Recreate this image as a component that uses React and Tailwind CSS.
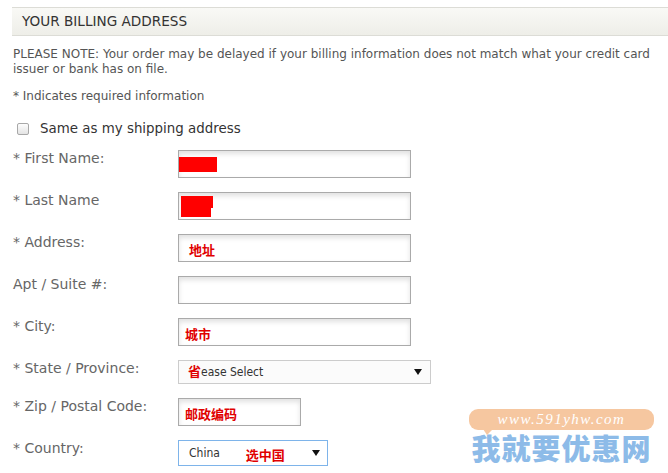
import React from "react"

const FIELDS = [
  { label: "* First Name:", kind: "input", width: "w-[233px]", fill: "first" },
  { label: "* Last Name", kind: "input", width: "w-[233px]", fill: "last" },
  { label: "* Address:", kind: "input", width: "w-[233px]", fill: "地址", pad: "pl-[10px]" },
  { label: "Apt / Suite #:", kind: "input", width: "w-[233px]" },
  { label: "* City:", kind: "input", width: "w-[233px]", fill: "城市", pad: "pl-[6px]" },
  { label: "* State / Province:", kind: "state" },
  { label: "* Zip / Postal Code:", kind: "input", width: "w-[123px]", fill: "邮政编码", pad: "pl-[6px]" },
  { label: "* Country:", kind: "country" },
]

const cn = "font-['Noto_Sans_CJK_SC',sans-serif] font-bold text-[13px] text-[#e00000]"

const TextBox = ({ width, fill, pad }) => (
  <div
    className={`${width} h-[28px] border border-[#aaaaaa] bg-white shadow-[inset_0_3px_5px_rgba(0,0,0,0.12)] flex flex-col items-start`}>
    {fill === "first" && <div className="mt-[6px] w-[38px] h-[15px] bg-[#ff0000]" />}
    {fill === "last" && (
      <div className="mt-[3px] ml-[2px] flex flex-col">
        <div className="w-[32px] h-[12px] bg-[#ff0000]" />
        <div className="w-[30px] h-[9px] bg-[#ff0000]" />
      </div>
    )}
    {fill && fill !== "first" && fill !== "last" && (
      <span className={`${cn} ${pad} mt-[7px] leading-[16px]`}>{fill}</span>
    )}
  </div>
)

const Arrow = () => (
  <svg width="8" height="6" viewBox="0 0 8 6">
    <path d="M0 0 H8 L4 6 Z" fill="#111" />
  </svg>
)

const StateSelect = () => (
  <div className="w-[253px] h-[24px] border border-[#cccccc] bg-[#fbfbfb] flex items-center pl-[9px] pr-[8px]">
    <span className={`${cn} leading-[16px] -mt-[3px]`}>省</span>
    <span className="text-[12px] text-[#333] font-['DejaVu_Sans_Condensed',sans-serif]">ease Select</span>
    <span className="ml-auto">
      <Arrow />
    </span>
  </div>
)

const CountrySelect = () => (
  <div className="w-[150px] h-[26px] border border-[#7eb4ea] bg-white flex items-center pl-[10px] pr-[7px]">
    <span className="text-[12px] text-[#333] font-['DejaVu_Sans_Condensed',sans-serif]">China</span>
    <span className={`${cn} ml-[26px] mt-[3px]`}>选中国</span>
    <span className="ml-auto">
      <Arrow />
    </span>
  </div>
)

const Watermark = () => (
  <div className="absolute left-[469px] top-[409px] w-[185px] pointer-events-none">
    <div className="relative h-[21px] rounded-[9px] bg-[#f6c7a0] flex items-center justify-center">
      <span className="font-['Liberation_Serif',serif] italic text-[15px] leading-[17px] tracking-[1.5px] text-white">
        www.591yhw.com
      </span>
      <div className="absolute left-[14px] bottom-[-5px] w-0 h-0 border-l-[4px] border-r-[6px] border-t-[6px] border-l-transparent border-r-transparent border-t-[#f6c7a0]" />
    </div>
    <div className="mt-[1px] text-center font-['Noto_Sans_CJK_SC',sans-serif] font-black text-[29px] leading-[32px] tracking-[1px] text-[#8dbbe8]">
      我就要优惠网
    </div>
  </div>
)

export default function App() {
  return (
    <div className="relative w-[668px] h-[473px] overflow-hidden bg-white pt-[7px] font-['DejaVu_Sans',sans-serif]">
      <div className="ml-[12px] h-[29px] border-t border-b border-[#dcdcd6] bg-gradient-to-b from-[#f9f9f6] to-[#eeeee8] flex items-center pl-[10px]">
        <span className="text-[13.6px] text-[#333]">YOUR BILLING ADDRESS</span>
      </div>

      <div className="ml-[13px] mt-[11px] text-[12px] leading-[15px] text-[#555] w-[650px]">
        PLEASE NOTE: Your order may be delayed if your billing information does not match what your credit card
        issuer or bank has on file.
      </div>

      <div className="ml-[13px] mt-[12px] text-[12px] leading-[15px] text-[#555]">* Indicates required information</div>

      <div className="ml-[17px] mt-[15px] flex items-center">
        <div className="w-[12px] h-[12px] border border-[#a8a8a8] rounded-[2px] bg-gradient-to-b from-[#fdfdfd] to-[#e4e4e4]" />
        <span className="ml-[11px] text-[13.4px] text-[#333]">Same as my shipping address</span>
      </div>

      <div className="mt-[11px] ml-[13px] flex flex-col gap-[14px]">
        {FIELDS.map((f, i) => (
          <div key={i} className="flex items-start">
            <div className="w-[165px] text-[14px] text-[#666] leading-[17px]">{f.label}</div>
            {f.kind === "input" && <TextBox width={f.width} fill={f.fill} pad={f.pad} />}
            {f.kind === "state" && <StateSelect />}
            {f.kind === "country" && <CountrySelect />}
          </div>
        ))}
      </div>

      <Watermark />
    </div>
  )
}
